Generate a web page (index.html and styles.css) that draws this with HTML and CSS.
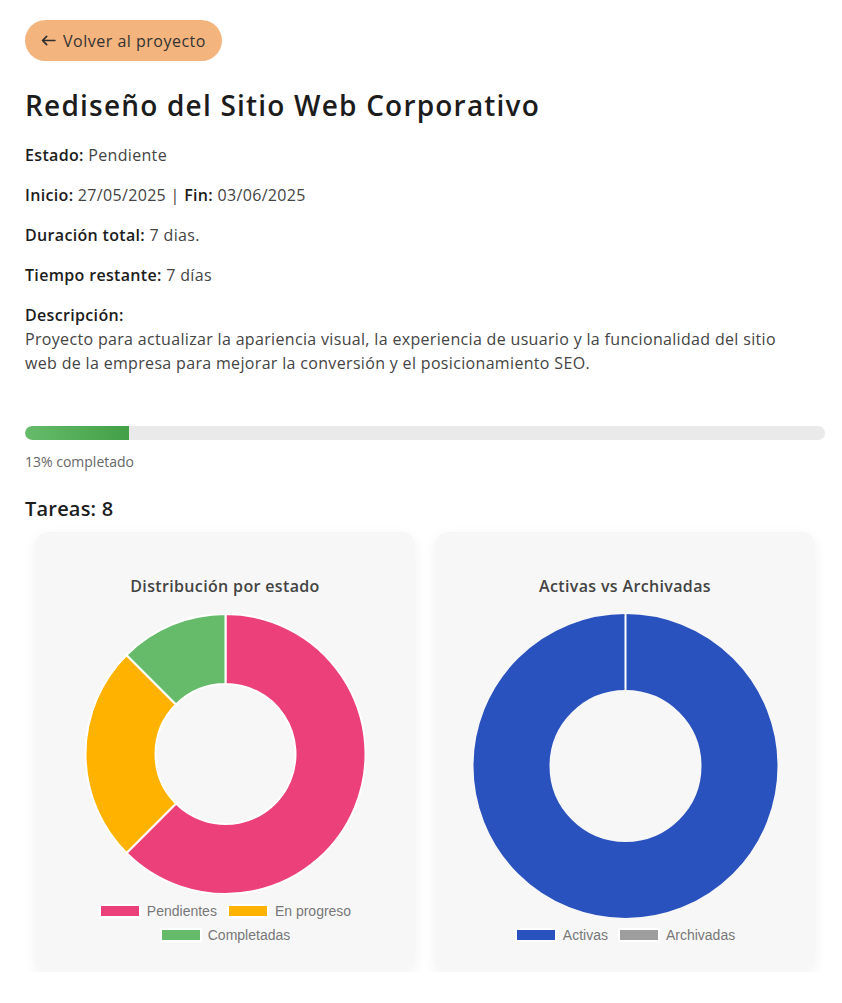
FILE: index.html
```html
<!DOCTYPE html>
<html lang="es">
<head>
<meta charset="utf-8">
<title>Rediseño del Sitio Web Corporativo</title>
<link rel="stylesheet" href="styles.css">
</head>
<body>
<main class="page">
  <a class="back-btn" href="#">
    <svg class="back-icon" viewBox="0 0 16 12" width="15" height="11" aria-hidden="true">
      <path d="M15 6H1.5M6 1.5L1.5 6 6 10.5" fill="none" stroke="#2e2e2e" stroke-width="1.8" stroke-linecap="round" stroke-linejoin="round"/>
    </svg>
    <span>Volver al proyecto</span>
  </a>

  <h1 class="title">Rediseño del Sitio Web Corporativo</h1>

  <p class="row"><strong>Estado:</strong> Pendiente</p>
  <p class="row"><strong>Inicio:</strong> 27/05/2025 | <strong>Fin:</strong> 03/06/2025</p>
  <p class="row"><strong>Duración total:</strong> 7 dias.</p>
  <p class="row"><strong>Tiempo restante:</strong> 7 días</p>
  <div class="row desc">
    <strong class="desc-label">Descripción:</strong>
    Proyecto para actualizar la apariencia visual, la experiencia de usuario y la funcionalidad del sitio web de la empresa para mejorar la conversión y el posicionamiento SEO.
  </div>

  <div class="progress"><div class="progress-fill" style="width:13%"></div></div>
  <p class="progress-text">13% completado</p>

  <h2 class="tasks">Tareas: 8</h2>

  <section class="charts">
    <div class="card">
      <h3 class="card-title">Distribución por estado</h3>
      <svg class="donut donut-left" viewBox="-169.5 -140 339 280" aria-hidden="true">
        <path d="M0 -140 A140 140 0 1 1 -98.995 98.995 L-49.497 49.497 A70 70 0 1 0 0 -70 Z" fill="#ec407a" stroke="#fff" stroke-width="2"/>
        <path d="M-98.995 98.995 A140 140 0 0 1 -98.995 -98.995 L-49.497 -49.497 A70 70 0 0 0 -49.497 49.497 Z" fill="#ffb300" stroke="#fff" stroke-width="2"/>
        <path d="M-98.995 -98.995 A140 140 0 0 1 0 -140 L0 -70 A70 70 0 0 0 -49.497 -49.497 Z" fill="#66bb6a" stroke="#fff" stroke-width="2"/>
      </svg>
      <ul class="legend">
        <li><span class="swatch pink"></span>Pendientes</li>
        <li><span class="swatch yellow"></span>En progreso</li>
        <li><span class="swatch green"></span>Completadas</li>
      </ul>
    </div>
    <div class="card">
      <h3 class="card-title">Activas vs Archivadas</h3>
      <svg class="donut donut-right" viewBox="-169.5 -152 339 304" aria-hidden="true">
        <circle cx="0" cy="0" r="114" fill="none" stroke="#2a52be" stroke-width="76"/>
        <line x1="0" y1="-153" x2="0" y2="-75" stroke="#fff" stroke-width="2"/>
      </svg>
      <ul class="legend">
        <li><span class="swatch blue"></span>Activas</li>
        <li><span class="swatch gray"></span>Archivadas</li>
      </ul>
    </div>
  </section>
</main>
</body>
</html>
```

FILE: styles.css
```css
* { box-sizing: border-box; }

body {
  margin: 0;
  background: #fff;
  font-family: "Open Sans", "DejaVu Sans", sans-serif;
  color: #444;
}

.page {
  width: 842px;
  padding: 20px 17px 0 25px;
}

.back-btn {
  display: inline-flex;
  align-items: center;
  gap: 7px;
  height: 41px;
  padding: 0 16px;
  border-radius: 21px;
  background: #f3b47e;
  color: #333;
  font-size: 16px;
  letter-spacing: 0.5px;
  text-decoration: none;
}

.back-icon { display: block; }

.title {
  margin: 27px 0 0;
  font-size: 28px;
  line-height: 34px;
  font-weight: 600;
  letter-spacing: 1.2px;
  color: #1c1c1c;
}

.row {
  margin: 21px 0 0;
  font-size: 16px;
  line-height: 24px;
  letter-spacing: 0.33px;
  color: #444;
}

.row + .row { margin-top: 16px; }

.row strong {
  font-weight: 600;
  color: #1c1c1c;
}

.desc { max-width: 786px; }

.desc-label { display: block; }

.progress {
  margin-top: 51px;
  width: 800px;
  height: 14px;
  border-radius: 7px;
  background: #eaeaea;
  overflow: hidden;
}

.progress-fill {
  height: 100%;
  border-radius: 7px 0 0 7px;
  background: linear-gradient(90deg, #66bb6a, #43a047);
}

.progress-text {
  margin: 12px 0 0;
  font-size: 14px;
  line-height: 20px;
  color: #666;
}

.tasks {
  margin: 24px 0 0;
  font-size: 20px;
  line-height: 26px;
  font-weight: 600;
  letter-spacing: 0.2px;
  color: #1c1c1c;
}

.charts {
  display: grid;
  grid-template-columns: minmax(0, 1fr) minmax(0, 1fr);
  gap: 20px;
  width: 800px;
  padding: 0 10px 0 10px;
  margin-top: 10px;
}

.card {
  display: flex;
  flex-direction: column;
  align-items: center;
  padding: 44px 20px 25px;
  background: #f7f7f7;
  border-radius: 14px;
  box-shadow: 0 4px 14px rgba(0, 0, 0, 0.06);
}

.card-title {
  margin: 0;
  font-size: 16px;
  line-height: 20px;
  font-weight: 600;
  letter-spacing: 0.35px;
  color: #444;
}

.donut {
  display: block;
  width: 339px;
  margin-top: 18px;
  flex: none;
}

.donut-left { height: 280px; }
.donut-right { height: 304px; }

.legend {
  list-style: none;
  margin: 5px 0 0;
  padding: 0;
  display: flex;
  flex-wrap: wrap;
  justify-content: center;
  column-gap: 10px;
  max-width: 339px;
  font-family: "Liberation Sans", Arial, sans-serif;
  font-size: 14px;
  color: #777;
}

.legend li {
  display: flex;
  align-items: center;
  gap: 6px;
  height: 24px;
}

.swatch {
  display: block;
  width: 42px;
  height: 14px;
  border: 2px solid #fff;
}

.pink { background: #ec407a; }
.yellow { background: #ffb300; }
.green { background: #66bb6a; }
.blue { background: #2a52be; }
.gray { background: #9e9e9e; }
```
